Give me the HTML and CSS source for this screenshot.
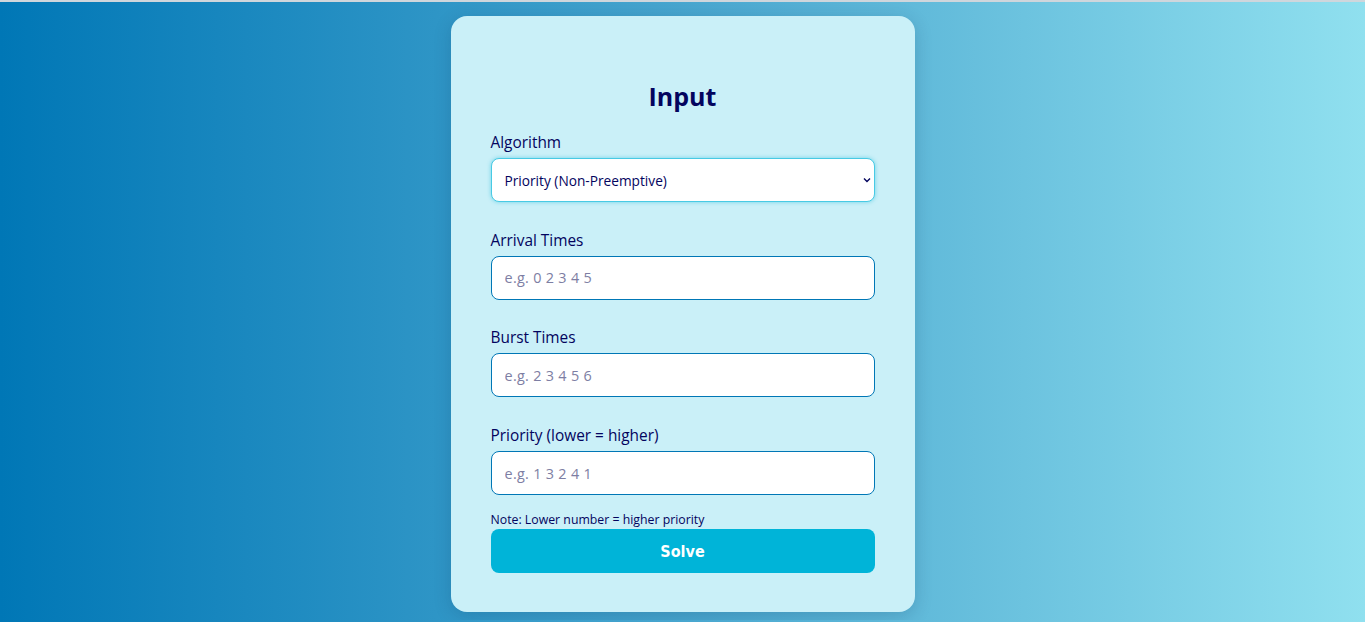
FILE: index.html
```html
<!DOCTYPE html>
<html lang="en">
<head>
<meta charset="utf-8">
<title>Scheduler Input</title>
<link rel="stylesheet" href="styles.css">
</head>
<body>
<main class="page">
  <section class="card">
    <h2 class="title">Input</h2>
    <div class="field">
      <label class="label" for="algo">Algorithm</label>
      <div class="select-wrap">
        <select id="algo" class="control select">
          <option>Priority (Non-Preemptive)</option>
        </select>
        <svg class="chev" width="8" height="6" viewBox="0 0 8 6"><path d="M1 1.5 L4 4.5 L7 1.5" fill="none" stroke="#03045e" stroke-width="1.4"/></svg>
      </div>
    </div>
    <div class="field">
      <label class="label" for="arr">Arrival Times</label>
      <input id="arr" class="control" type="text" placeholder="e.g. 0 2 3 4 5">
    </div>
    <div class="field">
      <label class="label" for="burst">Burst Times</label>
      <input id="burst" class="control" type="text" placeholder="e.g. 2 3 4 5 6">
    </div>
    <div class="field last">
      <label class="label" for="prio">Priority (lower = higher)</label>
      <input id="prio" class="control" type="text" placeholder="e.g. 1 3 2 4 1">
    </div>
    <p class="note">Note: Lower number = higher priority</p>
    <button class="solve" type="button">Solve</button>
  </section>
</main>
</body>
</html>
```

FILE: styles.css
```css
html, body {
  margin: 0;
  padding: 0;
}
body {
  font-family: "Open Sans", "Noto Sans", sans-serif;
  background: linear-gradient(90deg, #0077b6 0%, #48a6cf 50%, #90e0ef 100%);
  border-top: 2px solid #cfd6dc;
  min-height: 620px;
  box-sizing: border-box;
}
.page {
  display: flex;
  justify-content: center;
  padding-top: 14px;
}
.card {
  width: 464px;
  box-sizing: border-box;
  background: #caf0f8;
  border-radius: 16px;
  padding: 40px 40px 39px;
  box-shadow: 0 4px 18px rgba(0, 40, 80, 0.18);
  display: flex;
  flex-direction: column;
}
.title {
  margin: 25px 0 20px;
  text-align: center;
  font-size: 25px;
  line-height: 31px;
  font-weight: 700;
  color: #03045e;
}
.field {
  display: flex;
  flex-direction: column;
  gap: 5px;
  margin-bottom: 27.7px;
}
.field.last {
  margin-bottom: 16px;
}
.label {
  font-size: 15.4px;
  line-height: 21px;
  color: #03045e;
}
.control {
  height: 44px;
  box-sizing: border-box;
  width: 100%;
  border: 1px solid #0077b6;
  border-radius: 8px;
  background: #fff;
  padding: 0 13px;
  font-family: inherit;
  font-size: 14px;
  color: #03045e;
  outline: none;
}
.control::placeholder {
  color: #7d7ea3;
  font-size: 14.4px;
  letter-spacing: 0.3px;
}
.select-wrap {
  position: relative;
}
.select {
  appearance: none;
  -webkit-appearance: none;
  border-color: #48cae4;
  box-shadow: 0 0 4px rgba(0, 180, 216, 0.45);
  font-size: 13.7px;
}
.chev {
  position: absolute;
  right: 4px;
  top: 19px;
  pointer-events: none;
}
.note {
  margin: 0;
  font-size: 12.3px;
  line-height: 18px;
  color: #03045e;
}
.solve {
  height: 44px;
  border: none;
  border-radius: 8px;
  background: #00b4d8;
  color: #fff;
  font-family: "DejaVu Sans Condensed", "DejaVu Sans", sans-serif;
  font-stretch: condensed;
  font-weight: 700;
  font-size: 16px;
  cursor: pointer;
}
```
